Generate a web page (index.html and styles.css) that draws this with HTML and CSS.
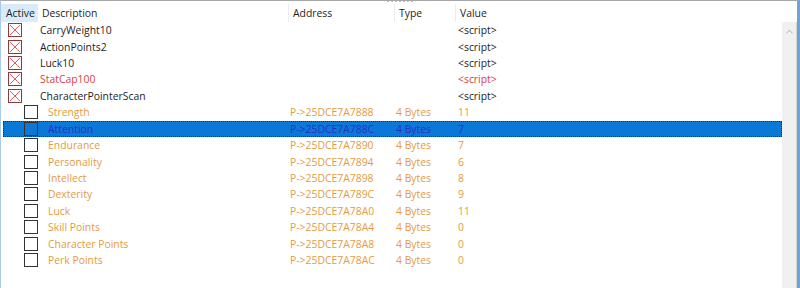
FILE: index.html
```html
<!DOCTYPE html>
<html lang="en">
<head>
    <meta charset="UTF-8">
    <title>Address list</title>
    <link rel="stylesheet" href="styles.css">
</head>
<body>

<div class="frame">
    <div class="grip"></div>
    <div class="body">
        <div class="list">
            <div class="header">
                <div class="col active-col">Active</div>
                <div class="col">Description</div>
                <div class="col">Address</div>
                <div class="col">Type</div>
                <div class="col">Value</div>
            </div>

            <div class="row parent">
                <div class="desc"><svg class="box x" viewBox="0 0 14 14"><rect x="0.5" y="0.5" width="13" height="13"/><path d="M2 2 L12 12 M12 2 L2 12"/></svg><span>CarryWeight10</span></div>
                <div class="cell"></div><div class="cell"></div><div class="cell">&lt;script&gt;</div>
            </div>
            <div class="row parent">
                <div class="desc"><svg class="box x" viewBox="0 0 14 14"><rect x="0.5" y="0.5" width="13" height="13"/><path d="M2 2 L12 12 M12 2 L2 12"/></svg><span>ActionPoints2</span></div>
                <div class="cell"></div><div class="cell"></div><div class="cell">&lt;script&gt;</div>
            </div>
            <div class="row parent">
                <div class="desc"><svg class="box x" viewBox="0 0 14 14"><rect x="0.5" y="0.5" width="13" height="13"/><path d="M2 2 L12 12 M12 2 L2 12"/></svg><span>Luck10</span></div>
                <div class="cell"></div><div class="cell"></div><div class="cell">&lt;script&gt;</div>
            </div>
            <div class="row parent red">
                <div class="desc"><svg class="box x" viewBox="0 0 14 14"><rect x="0.5" y="0.5" width="13" height="13"/><path d="M2 2 L12 12 M12 2 L2 12"/></svg><span>StatCap100</span></div>
                <div class="cell"></div><div class="cell"></div><div class="cell">&lt;script&gt;</div>
            </div>
            <div class="row parent">
                <div class="desc"><svg class="box x" viewBox="0 0 14 14"><rect x="0.5" y="0.5" width="13" height="13"/><path d="M2 2 L12 12 M12 2 L2 12"/></svg><span>CharacterPointerScan</span></div>
                <div class="cell"></div><div class="cell"></div><div class="cell">&lt;script&gt;</div>
            </div>

            <div class="row child">
                <div class="desc"><span class="box"></span><span>Strength</span></div>
                <div class="cell">P-&gt;25DCE7A7888</div><div class="cell">4 Bytes</div><div class="cell">11</div>
            </div>
            <div class="row child selected">
                <div class="desc"><span class="box"></span><span>Attention</span></div>
                <div class="cell">P-&gt;25DCE7A788C</div><div class="cell">4 Bytes</div><div class="cell">7</div>
            </div>
            <div class="row child">
                <div class="desc"><span class="box"></span><span>Endurance</span></div>
                <div class="cell">P-&gt;25DCE7A7890</div><div class="cell">4 Bytes</div><div class="cell">7</div>
            </div>
            <div class="row child">
                <div class="desc"><span class="box"></span><span>Personality</span></div>
                <div class="cell">P-&gt;25DCE7A7894</div><div class="cell">4 Bytes</div><div class="cell">6</div>
            </div>
            <div class="row child">
                <div class="desc"><span class="box"></span><span>Intellect</span></div>
                <div class="cell">P-&gt;25DCE7A7898</div><div class="cell">4 Bytes</div><div class="cell">8</div>
            </div>
            <div class="row child">
                <div class="desc"><span class="box"></span><span>Dexterity</span></div>
                <div class="cell">P-&gt;25DCE7A789C</div><div class="cell">4 Bytes</div><div class="cell">9</div>
            </div>
            <div class="row child">
                <div class="desc"><span class="box"></span><span>Luck</span></div>
                <div class="cell">P-&gt;25DCE7A78A0</div><div class="cell">4 Bytes</div><div class="cell">11</div>
            </div>
            <div class="row child">
                <div class="desc"><span class="box"></span><span>Skill Points</span></div>
                <div class="cell">P-&gt;25DCE7A78A4</div><div class="cell">4 Bytes</div><div class="cell">0</div>
            </div>
            <div class="row child">
                <div class="desc"><span class="box"></span><span>Character Points</span></div>
                <div class="cell">P-&gt;25DCE7A78A8</div><div class="cell">4 Bytes</div><div class="cell">0</div>
            </div>
            <div class="row child">
                <div class="desc"><span class="box"></span><span>Perk Points</span></div>
                <div class="cell">P-&gt;25DCE7A78AC</div><div class="cell">4 Bytes</div><div class="cell">0</div>
            </div>
        </div>

        <div class="scrollbar">
            <svg class="arrow" viewBox="0 0 8 5"><path d="M0.5 4.5 L4 1 L7.5 4.5"/></svg>
        </div>
    </div>
</div>

</body>
</html>
```

FILE: styles.css
```css
body {
    margin: 0;
    padding: 0;
    background-color: #ffffff;
    font-family: 'Open Sans', 'Liberation Sans', sans-serif;
    font-size: 10.4px;
    color: #1e1e1e;
}

.frame {
    width: 800px;
    height: 288px;
    box-sizing: border-box;
    border-top: 1px solid #a8a8a8;
    border-left: 1px solid #a9cbea;
    border-right: 3px solid #6fa3d8;
    position: relative;
    overflow: hidden;
}

/* splitter grip on the top edge */
.grip {
    position: absolute;
    top: -1px;
    left: 386px;
    width: 26px;
    height: 2px;
    border-top: 2px dotted #c9b8b0;
    box-sizing: border-box;
}

.body {
    display: flex;
    height: 100%;
}

.list {
    flex: 1;
    padding-top: 3px;
}

.header {
    display: grid;
    grid-template-columns: 37px 251px 106px 61px 1fr;
    height: 18px;
    align-items: center;
}

.header .col {
    padding-left: 4px;
    height: 100%;
    display: flex;
    align-items: center;
    border-right: 1px solid #ececec;
}

.header .col:last-child {
    border-right: none;
}

.header .active-col {
    background-color: #d9ebf9;
    padding-left: 5px;
}

.row {
    display: grid;
    grid-template-columns: 286px 106px 61px 1fr;
    height: 16.43px;
    align-items: center;
    margin-left: 2px;
    white-space: nowrap;
    box-sizing: border-box;
}

.row .desc {
    display: flex;
    align-items: center;
}

.row .cell {
    padding-left: 1px;
}

.row .cell:last-child {
    padding-left: 2px;
}

.box {
    width: 14px;
    height: 14px;
    box-sizing: border-box;
    flex-shrink: 0;
}

.parent .box {
    margin-left: 5px;
    margin-right: 18px;
}

.box.x rect {
    fill: #ffffff;
    stroke: #8c3b3b;
    stroke-width: 1;
}

.box.x path {
    stroke: #e25b5b;
    stroke-width: 1;
}

.child {
    color: #e49b3e;
}

.child .box {
    border: 1px solid #333333;
    margin-left: 21px;
    margin-right: 10px;
}

.red {
    color: #e03c44;
}

.selected {
    background-color: #0a78d7;
    color: #2b2fc4;
    outline: 1px dotted #203040;
    outline-offset: -1px;
}

.scrollbar {
    width: 14px;
    margin-top: 21px;
    background-color: #f0f0f0;
    border-right: 1px solid #d4d4d4;
    display: flex;
    justify-content: center;
}

.arrow {
    width: 7px;
    height: 5px;
    margin-top: 7px;
    fill: none;
    stroke: #a6a6a6;
    stroke-width: 1;
}
```
